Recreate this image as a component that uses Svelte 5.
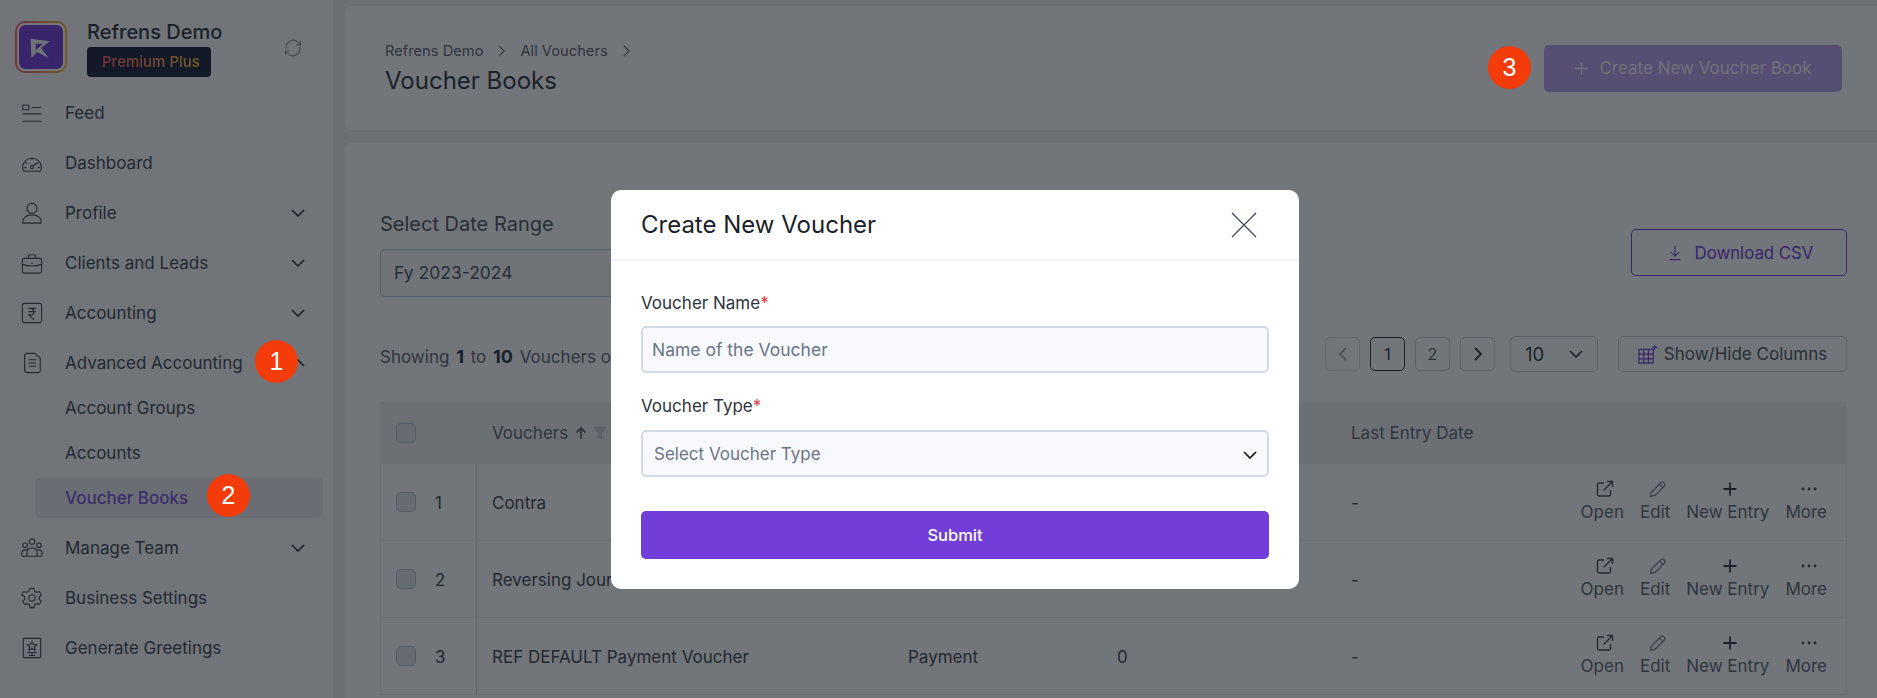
<script>
  const ic = {
    feed: 'M2 3.500h6.500v5H2zM11.500 6H22M2 13h20M2 21h20',
    dash: 'M2 19a10.200 10.200 0 1 1 20 0c0 1.200-.8 2-2 2H4c-1.200 0-2-.8-2-2zM12 6v2.500M5 11.500l2 1.500M19 11.500l-2 1.500M3.500 17H6M18 17h2.500M13.200 15.300l3.800-3.300M13.500 16.500a1.600 1.600 0 1 1-3.200 0 1.600 1.600 0 0 1 3.200 0z',
    user: 'M17.500 7a5.500 5.500 0 1 1-11 0 5.500 5.500 0 0 1 11 0zM2 23v-1.500c0-4 3.500-7.500 10-7.500s10 3.500 10 7.500V23z',
    brief: 'M3.500 7h17a2 2 0 0 1 2 2v12a2 2 0 0 1-2 2h-17a2 2 0 0 1-2-2V9a2 2 0 0 1 2-2zM8 7V4.500A1.500 1.500 0 0 1 9.500 3h5A1.500 1.500 0 0 1 16 4.500V7M1.500 13.500c6 2 15 2 21 0M12 11.500v1.500',
    rupee: 'M3.500 1.500h17a2 2 0 0 1 2 2v17a2 2 0 0 1-2 2h-17a2 2 0 0 1-2-2v-17a2 2 0 0 1 2-2zM8 7h8M8 10.500h8M8.500 7h2a3.500 3.500 0 0 1 0 7H8.500l6 5.500',
    doc: 'M7 1.500h8l6 5v14a2 2 0 0 1-2 2H7c-2 0-3-1-3-2.500v-16C4 2.500 5 1.500 7 1.500zM8.500 8.500h8M8.500 12h8M8.500 15.500h8',
    team: 'M15 5a3 3 0 1 1-6 0 3 3 0 0 1 6 0zM7 9a2.500 2.500 0 1 1-5 0 2.500 2.500 0 0 1 5 0zM22 9a2.500 2.500 0 1 1-5 0 2.500 2.500 0 0 1 5 0zM6.500 21v-4c0-3 2-5 5.500-5s5.500 2 5.500 5v4M1 21v-3c0-2 1.500-4 4-4h2M23 21v-3c0-2-1.500-4-4-4h-2M1 21h22',
    gear: 'M10 1.500h4l.8 3 2.300 1.300 3-.8 2 3.500-2.200 2.200v2.600l2.200 2.200-2 3.500-3-.8-2.300 1.300-.8 3h-4l-.8-3-2.300-1.300-3 .8-2-3.500 2.200-2.200v-2.600L.9 8.500l2-3.500 3 .8 2.300-1.300zM15.500 12a3.500 3.500 0 1 1-7 0 3.500 3.500 0 0 1 7 0z',
    greet: 'M3.500 1.500h17a1 1 0 0 1 1 1v19a1 1 0 0 1-1 1h-17a1 1 0 0 1-1-1v-19a1 1 0 0 1 1-1zM12 5l1.500 3.200 3.500.4-2.600 2.300.8 3.400-3.200-1.800-3.200 1.800.8-3.400L7 8.600l3.500-.4zM7 17h10M9 20h6'
  };
  const before = [
    ['Feed', 'feed', false], ['Dashboard', 'dash', false], ['Profile', 'user', true],
    ['Clients and Leads', 'brief', true], ['Accounting', 'rupee', true]
  ];
  const after = [['Manage Team', 'team', true], ['Business Settings', 'gear', false], ['Generate Greetings', 'greet', false]];
  const rows = [
    { n: 1, name: 'Contra', type: 'Contra' },
    { n: 2, name: 'Reversing Journal', type: 'Journal' },
    { n: 3, name: 'REF DEFAULT Payment Voucher', type: 'Payment' }
  ];
</script>

{#snippet navItem(item)}
  <div class="nav-item">
    <svg class="nav-icon" viewBox="0 0 24 24"><path d={ic[item[1]]} /></svg>
    <span>{item[0]}</span>
    {#if item[2]}
      <svg class="chev" viewBox="0 0 14 8"><path d="M1 1l6 6 6-6" /></svg>
    {/if}
  </div>
{/snippet}

<div class="page">
  <aside class="sidebar">
    <div class="brand">
      <div class="logo-ring">
        <div class="logo">
          <svg viewBox="0 0 44 44"><path fill-rule="evenodd" d="M13.700 15.700L32.700 18.300 24 25 31.700 35 20 29 14.300 35zM18.700 20.700H26L18.700 27.300z" /></svg>
        </div>
      </div>
      <div class="brand-text">
        <div class="brand-name">Refrens Demo</div>
        <div class="plan"><span>Premium Plus</span></div>
      </div>
      <svg class="sync" viewBox="0 0 24 24"><path d="M4 13a8.500 8.500 0 0 1 15-7l2 2.500M21 3.500v5h-5M20 11a8.500 8.500 0 0 1-15 7l-2-2.500M3 20.500v-5h5" /></svg>
    </div>

    <nav>
      {#each before as item}{@render navItem(item)}{/each}
      <div class="nav-item">
        <svg class="nav-icon" viewBox="0 0 24 24"><path d={ic.doc} /></svg>
        <span>Advanced Accounting</span>
        <svg class="chev" viewBox="0 0 14 8"><path d="M1 7l6-6 6 6" /></svg>
      </div>
      <div class="subnav">
        <div class="sub">Account Groups</div>
        <div class="sub">Accounts</div>
        <div class="sub active">Voucher Books</div>
      </div>
      {#each after as item}{@render navItem(item)}{/each}
    </nav>
  </aside>

  <main>
    <header class="top-card">
      <div>
        <div class="crumbs">
          <span>Refrens Demo</span>
          <svg viewBox="0 0 8 14"><path d="M1 1l6 6-6 6" /></svg>
          <span>All Vouchers</span>
          <svg viewBox="0 0 8 14"><path d="M1 1l6 6-6 6" /></svg>
        </div>
        <h1>Voucher Books</h1>
      </div>
      <button class="create">
        <svg viewBox="0 0 16 16"><path d="M8 1v14M1 8h14" /></svg>
        Create New Voucher Book
      </button>
    </header>

    <section class="content">
      <div class="filters">
        <div>
          <div class="field-label">Select Date Range</div>
          <div class="range">Fy 2023-2024</div>
        </div>
        <button class="download">
          <svg viewBox="0 0 16 18"><path d="M8 1v11M3.500 8L8 12.500 12.500 8M2 16.500h12" /></svg>
          Download CSV
        </button>
      </div>

      <div class="toolbar">
        <div class="showing">Showing <b>1</b> to <b>10</b> Vouchers of 12</div>
        <div class="tools">
          <div class="pages">
            <div class="pg faint"><svg viewBox="0 0 8 14"><path d="M7 1L1 7l6 6" /></svg></div>
            <div class="pg current">1</div>
            <div class="pg">2</div>
            <div class="pg"><svg viewBox="0 0 8 14"><path d="M1 1l6 6-6 6" /></svg></div>
          </div>
          <div class="size">10 <svg viewBox="0 0 14 8"><path d="M1 1l6 6 6-6" /></svg></div>
          <button class="columns">
            <svg viewBox="0 0 20 20"><path d="M1 4.500h15v14.500H1zM1 9.500h15M1 14.500h15M6 4.500V19M11 4.500V19M17.500 0v5M15 2.500h5" /></svg>
            Show/Hide Columns
          </button>
        </div>
      </div>

      <div class="table">
        <div class="row head">
          <div class="c0"><span class="check"></span></div>
          <div class="cell name">Vouchers
            <svg class="sort" viewBox="0 0 12 14"><path d="M6 13V2M1.500 6.500L6 2l4.500 4.500" /></svg>
            <svg class="funnel" viewBox="0 0 14 14"><path d="M1 1h12L8.500 7v6l-3-1.500V7z" /></svg>
          </div>
          <div class="cell">Type</div>
          <div class="cell">Entries</div>
          <div class="cell">Last Entry Date</div>
          <div></div>
        </div>
        {#each rows as r}
          <div class="row">
            <div class="c0 divided"><span class="check"></span><span class="num">{r.n}</span></div>
            <div class="cell name">{r.name}</div>
            <div class="cell">{r.type}</div>
            <div class="cell">0</div>
            <div class="cell">-</div>
            <div class="actions">
              <div class="act">
                <svg viewBox="0 0 18 18"><path d="M8 3H3a1.500 1.500 0 0 0-1.500 1.500v10A1.500 1.500 0 0 0 3 16h10a1.500 1.500 0 0 0 1.500-1.500V10M7.500 10.500L16.500 1.500M11 1.500h5.500V7" /></svg>
                <span>Open</span>
              </div>
              <div class="act">
                <svg class="light" viewBox="0 0 18 18"><path d="M1.500 16.500l1-4.500L12 2.500a1.800 1.800 0 0 1 2.500 0l1 1a1.800 1.800 0 0 1 0 2.500L6 15.500zM10.500 4l3.500 3.500" /></svg>
                <span>Edit</span>
              </div>
              <div class="act">
                <svg class="bold" viewBox="0 0 18 18"><path d="M9 2.500v13M2.500 9h13" /></svg>
                <span>New Entry</span>
              </div>
              <div class="act">
                <svg class="dots" viewBox="0 0 18 18"><circle cx="3" cy="9" r="1.400" /><circle cx="9" cy="9" r="1.400" /><circle cx="15" cy="9" r="1.400" /></svg>
                <span>More</span>
              </div>
            </div>
          </div>
        {/each}
      </div>
    </section>
  </main>

  <div class="overlay"></div>

  <div class="modal">
    <div class="modal-head">
      <h2>Create New Voucher</h2>
      <svg viewBox="0 0 26 26"><path d="M1 1l24 24M25 1L1 25" /></svg>
    </div>
    <form class="modal-body">
      <label for="vname">Voucher Name<em>*</em></label>
      <input id="vname" placeholder="Name of the Voucher" />
      <label class="second" for="vtype">Voucher Type<em>*</em></label>
      <div class="select-wrap">
        <select id="vtype"><option>Select Voucher Type</option></select>
        <svg viewBox="0 0 14 8"><path d="M1 1l6 6 6-6" /></svg>
      </div>
      <button type="button" class="submit">Submit</button>
    </form>
  </div>

  <div class="step one">1</div>
  <div class="step two">2</div>
  <div class="step three">3</div>
</div>

<style>
  :global(body) { margin: 0; }
  * { box-sizing: border-box; }
  svg { display: block; fill: none; stroke: currentColor; flex: none; }
  .page {
    position: relative; width: 1877px; height: 698px; overflow: hidden; display: flex;
    background: #e9e9ec; color: #3f4652;
    font-family: Inter, "Liberation Sans", sans-serif; font-size: 15px;
  }
  .overlay { position: absolute; inset: 0; background: rgba(15, 20, 28, 0.58); }

  .sidebar { width: 333px; flex: none; background: #f8f8fa; }
  .brand { height: 88px; display: flex; padding: 21px 30px 0 15px; }
  .logo-ring {
    width: 52px; height: 52px; padding: 2px; border-radius: 10px;
    background: linear-gradient(90deg, #f0606a, #f5b93a);
  }
  .logo { height: 100%; border: 2px solid #fff; border-radius: 8px; background: #723dd8; overflow: hidden; background-clip: padding-box; }
  .logo svg { width: 44px; height: 44px; margin: -2px; }
  .logo path { fill: #f2f2f6; stroke: none; }
  .brand-text { margin-left: 20px; }
  .brand-name { font-size: 20px; font-weight: 500; line-height: 22px; color: #2d3340; white-space: nowrap; }
  .plan { margin-top: 4px; height: 30px; width: 124px; border-radius: 4px; background: #1c1f3a; font-size: 15px; font-weight: 500; line-height: 30px; padding-left: 15px; white-space: nowrap; }
  .plan span { background: linear-gradient(90deg, #ff5a6a, #ffc93c); -webkit-background-clip: text; background-clip: text; color: transparent; }
  .sync { margin-left: auto; margin-top: 17px; width: 20px; height: 20px; stroke: #8a8f99; stroke-width: 1.300; }

  .nav-item { height: 50px; display: flex; align-items: center; padding: 0 28px 0 21px; font-size: 17px; }
  .nav-icon { width: 22px; height: 22px; stroke: #3f4652; stroke-width: 1.200; margin-right: 22px; }
  .chev { width: 14px; height: 8px; margin-left: auto; stroke: #2d3340; stroke-width: 1.600; }
  .subnav { margin: -3px 10px 5px 35px; }
  .sub { height: 45px; display: flex; align-items: center; padding-left: 30px; font-size: 17px; }
  .sub.active { height: 40px; margin: 2.500px 0; border-radius: 5px; background: #e8e9ee; color: #7a4fdc; font-weight: 500; }

  main { flex: 1; min-width: 0; padding: 6px 0 0 12px; }
  .top-card {
    height: 124px; display: flex; align-items: center; justify-content: space-between;
    padding: 0 35px 0 40px; background: #fafafb; border-radius: 6px 0 0 6px;
  }
  .crumbs { display: flex; align-items: center; height: 20px; font-size: 14.700px; color: #5d6472; }
  .crumbs svg { width: 7px; height: 12px; margin: 0 15px; stroke-width: 1.300; }
  h1 { margin: 5px 0 0; font-size: 24px; line-height: 30px; font-weight: 400; color: #2d3340; }
  button { font: inherit; cursor: pointer; display: flex; align-items: center; justify-content: center; }
  .create {
    width: 298px; height: 47px; gap: 10px; border: 0; border-radius: 5px;
    background: #b89eec; color: #f2eefb; font-size: 17px;
  }
  .create svg { width: 15px; height: 15px; stroke-width: 1.400; }

  .content { margin-top: 13px; height: 560px; padding: 69px 30px 0 35px; background: #fafafb; border-radius: 6px 0 0 0; }
  .filters { display: flex; justify-content: space-between; align-items: flex-start; }
  .field-label { font-size: 20px; line-height: 24px; color: #4c5360; }
  .range { margin-top: 13px; width: 320px; height: 48px; border: 1px solid #b6c0d2; border-radius: 5px; padding-left: 13px; font-size: 17.500px; line-height: 46px; color: #4c5360; background: #f5f7fb; }
  .download { margin-top: 17px; width: 216px; height: 47px; gap: 13px; padding-left: 9px; background: none; border: 1.500px solid #723dd8; border-radius: 5px; color: #723dd8; font-size: 16.800px; }
  .download svg { width: 14px; height: 16px; stroke-width: 1.300; }

  .toolbar { margin-top: 39px; height: 36px; display: flex; justify-content: space-between; align-items: center; }
  .showing { font-size: 17px; color: #5d6472; padding-top: 4px; }
  .showing b { font-size: 18px; font-weight: 700; margin: 0 2px; color: #2d3340; }
  .tools { display: flex; align-items: center; }
  .pages { display: flex; gap: 10px; margin-right: 15px; }
  .pg { width: 35px; height: 34px; display: flex; align-items: center; justify-content: center; border: 1.500px solid #c3cbd8; border-radius: 5px; font-size: 16px; color: #5d6472; }
  .pg svg { width: 8px; height: 14px; stroke-width: 1.800; color: #2d3340; }
  .pg.faint { border-color: #d5dae3; }
  .pg.faint svg { color: #a5abb6; }
  .pg.current { border-color: #2d3340; color: #2d3340; }
  .size { width: 88px; height: 36px; display: flex; align-items: center; justify-content: space-between; padding: 0 14px; margin-right: 20px; border: 1.500px solid #c3cbd8; border-radius: 5px; font-size: 18.500px; color: #2d3340; }
  .size svg { width: 14px; height: 8px; stroke-width: 1.600; }
  .columns { width: 229px; height: 36px; gap: 7px; background: none; border: 1.500px solid #c3cbd8; border-radius: 5px; font-size: 17px; color: #4c5360; }
  .columns svg { width: 19px; height: 19px; stroke: #723dd8; stroke-width: 1.300; }

  .table { margin-top: 30px; border-left: 1px solid #edeef2; border-right: 1px solid #edeef2; }
  .row { display: grid; grid-template-columns: 96px 415px 209px 234px 150px 1fr; height: 77px; border-bottom: 1px solid #e8eaf0; align-items: center; font-size: 17px; color: #3f4652; }
  .row.head { height: 62px; background: #eceef1; color: #5d6472; border-bottom: 0; }
  .c0 { height: 100%; display: flex; align-items: center; padding-left: 15px; }
  .c0.divided { border-right: 1px solid #c3cbd8; }
  .check { width: 20px; height: 20px; border: 1.500px solid #b4bfd0; border-radius: 5px; background: #dfe5ee; }
  .num { margin-left: 19px; padding-top: 2px; font-size: 17px; }
  .cell { padding: 2px 0 0 16px; display: flex; align-items: center; }
  .head .cell { padding-top: 0; }
  .cell.name { padding-left: 15px; white-space: nowrap; }
  .sort { width: 12px; height: 14px; margin-left: 7px; stroke-width: 1.800; }
  .funnel { width: 14px; height: 14px; margin-left: 6px; fill: #c5cad3; stroke: #c5cad3; }
  .actions { display: flex; justify-content: flex-end; gap: 16px; padding: 0 19px 2px 0; }
  .act { display: flex; flex-direction: column; align-items: center; gap: 4px; font-size: 17px; line-height: 20px; color: #5d6472; white-space: nowrap; }
  .act svg { width: 18px; height: 18px; margin-left: 5px; stroke-width: 1.300; color: #3f4652; }
  .act svg.light { color: #7b8290; }
  .act svg.bold { stroke-width: 1.800; color: #2d3340; }
  .act svg.dots { fill: #3f4652; stroke: none; }

  .modal { position: absolute; left: 611px; top: 190px; width: 688px; background: #fff; border-radius: 10px; color: #1f2530; }
  .modal-head { height: 71px; padding: 0 30px; border-bottom: 2px solid #f3f5f9; display: flex; align-items: center; justify-content: space-between; }
  h2 { margin: 0; font-size: 24px; font-weight: 400; color: #1a1f2b; }
  .modal-head svg { width: 26px; height: 26px; margin-right: 12px; stroke: #3e4a5e; stroke-width: 1.300; }
  .modal-body { padding: 30px 30px 30px; display: flex; flex-direction: column; }
  label { font-size: 17px; line-height: 24px; color: #2d3340; }
  label.second { margin-top: 21px; }
  em { color: #e5383b; font-style: normal; }
  input, select {
    width: 100%; height: 47px; border: 2px solid #d3dbeb; border-radius: 5px; background: #f7f9fe;
    font: inherit; font-size: 17.500px; color: #6b7586; outline: none; appearance: none;
  }
  input { margin-top: 11px; padding: 0 9px; }
  select { padding: 0 11px; font-size: 17px; }
  input::placeholder { color: #6b7586; opacity: 1; }
  .select-wrap { position: relative; margin-top: 12px; }
  .select-wrap svg { position: absolute; right: 12px; top: 21px; width: 14px; height: 8px; stroke: #111; stroke-width: 1.600; }
  .submit { margin-top: 34px; height: 48px; border: 0; border-radius: 5px; background: #723dd8; color: #fff; font-size: 16.500px; font-weight: 500; }

  .step {
    position: absolute; width: 43px; height: 43px; border-radius: 50%; background: #f43b0a; color: #fff;
    display: flex; align-items: center; justify-content: center; font-family: "Liberation Sans", sans-serif; font-size: 25px;
  }
  .one { left: 255px; top: 340px; }
  .two { left: 207px; top: 474px; }
  .three { left: 1488px; top: 46px; }
</style>
